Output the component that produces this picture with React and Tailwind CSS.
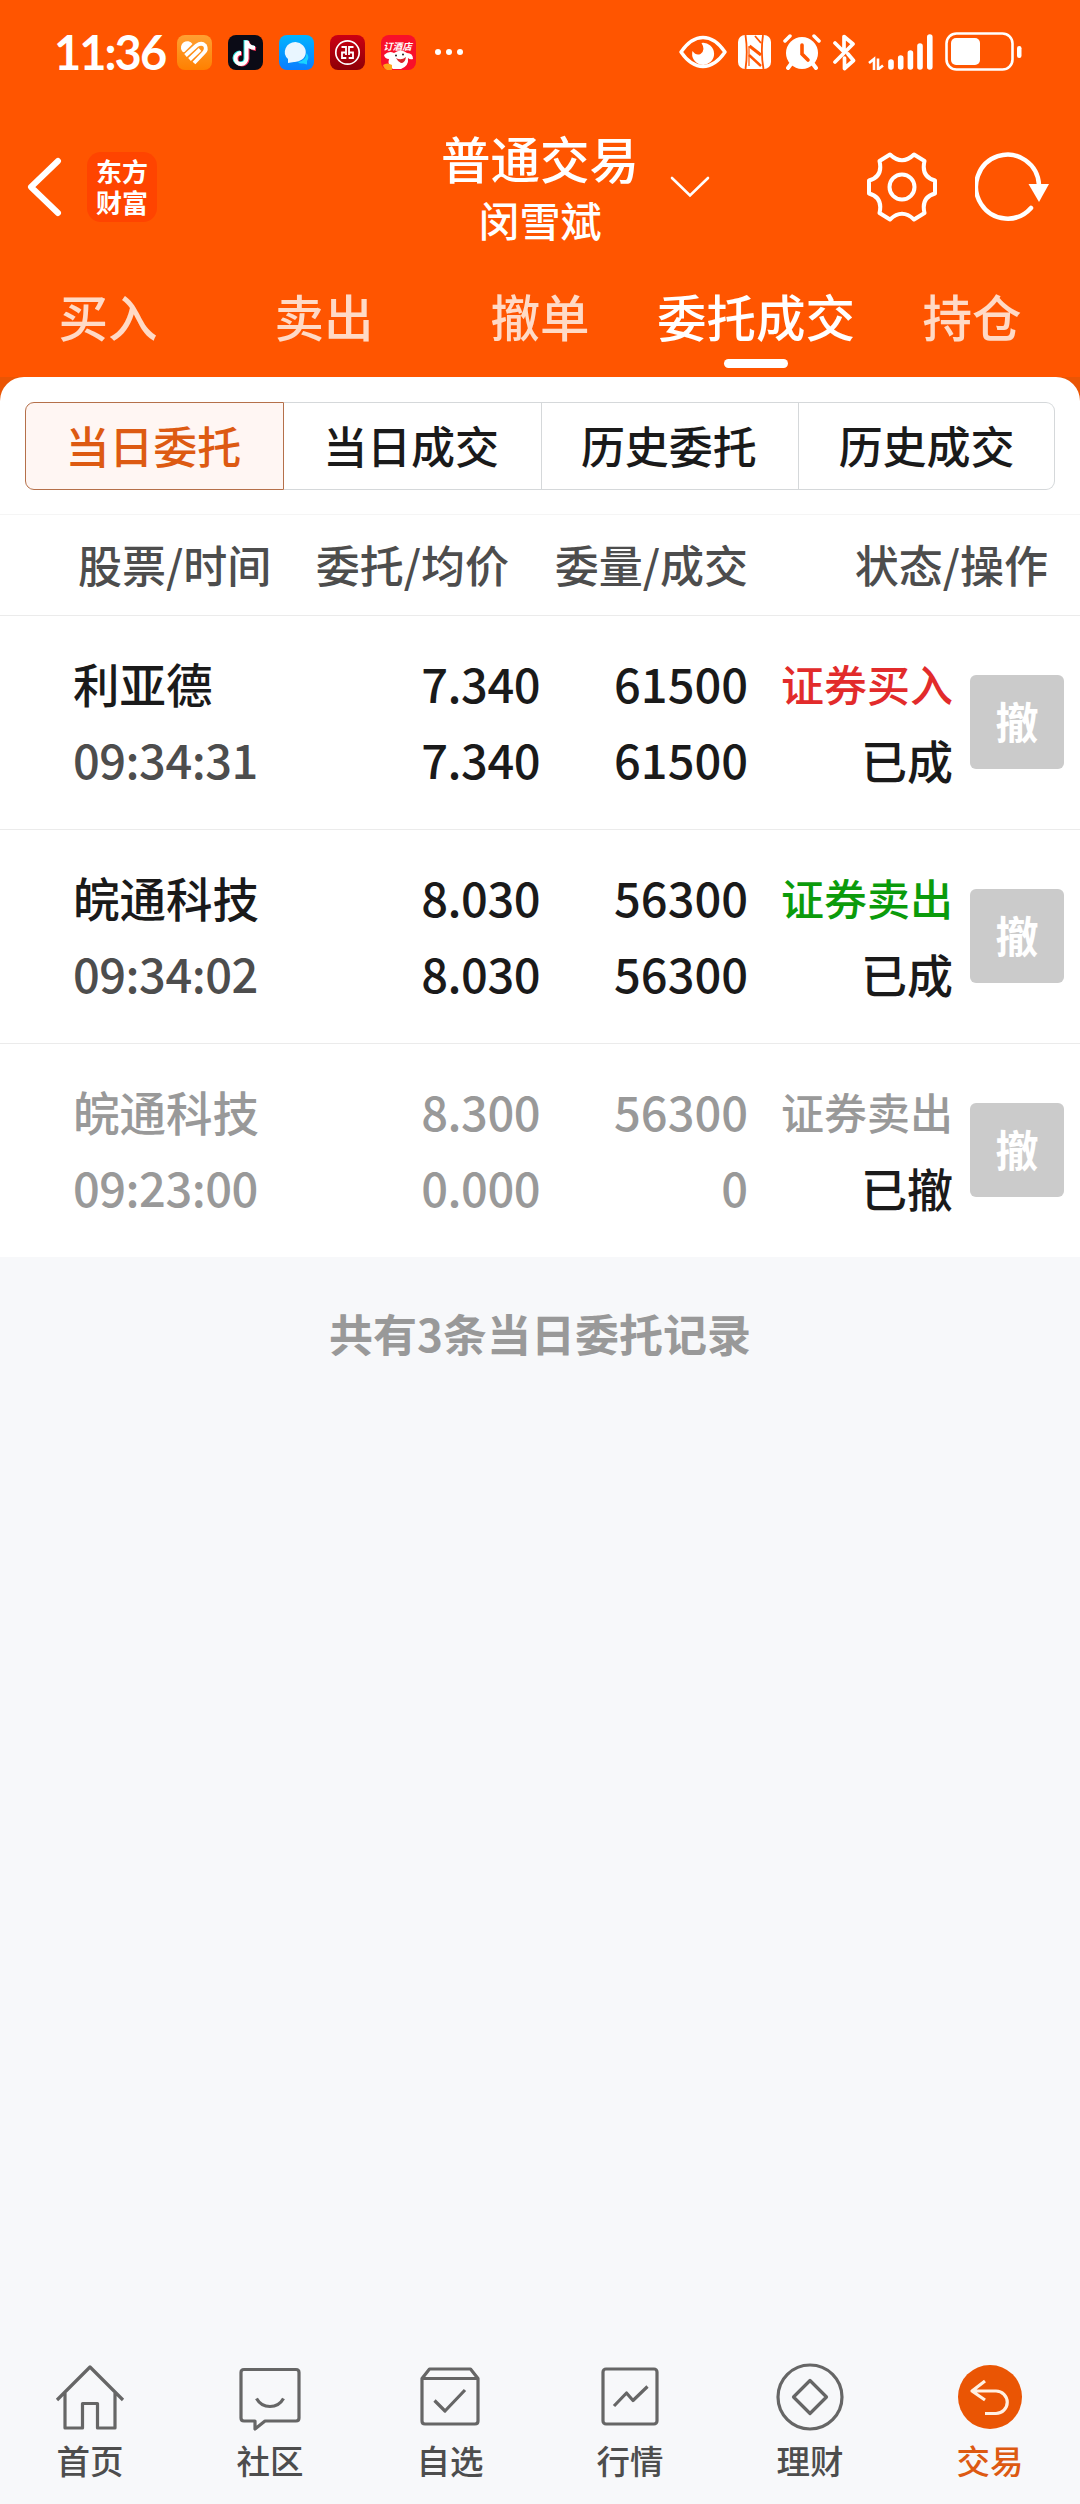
import React from 'react';

const tabs = ['买入', '卖出', '撤单', '委托成交', '持仓'];

const segments = ['当日委托', '当日成交', '历史委托', '历史成交'];

const orders = [
  {
    name: '利亚德',
    time: '09:34:31',
    price: '7.340',
    avg: '7.340',
    qty: '61500',
    filled: '61500',
    side: '证券买入',
    sideColor: 'text-[#e22b2b]',
    status: '已成',
  },
  {
    name: '皖通科技',
    time: '09:34:02',
    price: '8.030',
    avg: '8.030',
    qty: '56300',
    filled: '56300',
    side: '证券卖出',
    sideColor: 'text-[#0b9b0b]',
    status: '已成',
  },
  {
    name: '皖通科技',
    time: '09:23:00',
    price: '8.300',
    avg: '0.000',
    qty: '56300',
    filled: '0',
    side: '证券卖出',
    sideColor: 'text-[#999999]',
    status: '已撤',
    canceled: true,
  },
];

function StatusBar() {
  return (
    <div className="flex h-[104px] items-center justify-between pl-[54px] pr-[57px] text-white">
      <div className="flex items-center">
        <span className="w-[123px] whitespace-nowrap pb-px font-['Lato','Noto_Sans_CJK_SC',sans-serif] text-[47px] font-bold leading-[46px] tracking-[-2px]">
          11:36
        </span>
        <div className="flex items-center gap-4">
          {/* Health */}
          <svg className="h-[35px] w-[35px]" viewBox="0 0 35 35">
            <defs>
              <linearGradient id="health" x1="0" y1="0" x2="0" y2="1">
                <stop offset="0" stopColor="#ffa033" />
                <stop offset="1" stopColor="#ff8000" />
              </linearGradient>
            </defs>
            <rect width="35" height="35" rx="8" fill="url(#health)" />
            <path d="M5 16 A5.500 5.500 0 0 1 15.500 9 L7.500 17 Q5.500 17.500 5 16Z" fill="#fff" />
            <g stroke="#fff" strokeWidth="3.800" fill="none">
              <path d="M8.500 20.500 L19.500 10.500 Q24.500 7 28 10.500 Q30 14.500 27 17.500 L17 28" />
              <path d="M12.500 24.500 L23 14.500" />
            </g>
          </svg>
          {/* Short video */}
          <svg className="h-[35px] w-[35px]" viewBox="0 0 35 35">
            <rect width="35" height="35" rx="8" fill="#0b0b16" />
            <g fill="none" strokeWidth="4">
              <path d="M17.500 5 V23 A5.500 5.500 0 1 1 12 17.500 M17.500 6 Q19 12 26 12.500" stroke="#28e5e0" />
              <path d="M19.500 6 V24 A5.500 5.500 0 1 1 14 18.500 M19.500 7 Q21 13 28 14" stroke="#fb3059" />
              <path d="M18.500 5.500 V23.500 A5.500 5.500 0 1 1 13 18 M18.500 6 Q20 12.500 27 13" stroke="#fff" />
            </g>
          </svg>
          {/* Messages */}
          <svg className="h-[35px] w-[35px]" viewBox="0 0 35 35">
            <defs>
              <linearGradient id="msg" x1="0" y1="0" x2="0" y2="1">
                <stop offset="0" stopColor="#00b4ff" />
                <stop offset="1" stopColor="#0a7dff" />
              </linearGradient>
            </defs>
            <rect width="35" height="35" rx="8" fill="url(#msg)" />
            <path d="M19 27 Q27 26 27.500 18 Q31 22 28 26 V29.500 L24.500 28.500 Q20 29 19 27Z" fill="#19d3ff" />
            <path d="M16.500 7 A11 10 0 1 1 15 27 L9 28 V24 A11 10 0 0 1 16.500 7Z" fill="#e9f6ff" />
          </svg>
          {/* Bank */}
          <svg className="h-[35px] w-[35px]" viewBox="0 0 35 35">
            <defs>
              <linearGradient id="bank" x1="0" y1="0" x2="0" y2="1">
                <stop offset="0" stopColor="#cc0012" />
                <stop offset="1" stopColor="#8d0007" />
              </linearGradient>
            </defs>
            <rect width="35" height="35" rx="8" fill="url(#bank)" />
            <circle cx="17.500" cy="17.500" r="11.700" fill="none" stroke="#fff" strokeWidth="1.700" />
            <path
              d="M11.500 12 H16 V17.500 H12 V23 H16.300 M23.500 12 H19 V17.500 H23 V23 H18.700 M16 17.500 V20 M19 17.500 V20"
              fill="none"
              stroke="#fff"
              strokeWidth="1.800"
            />
          </svg>
          {/* Shopping */}
          <svg className="h-[35px] w-[35px]" viewBox="0 0 35 35">
            <rect width="35" height="35" rx="8" fill="#f8102a" />
            <text x="16.500" y="14.500" textAnchor="middle" fontSize="9.500" fontWeight="700" fill="#fff" fontStyle="italic">订酒店</text>
            <path d="M3 20 Q8 15 13 18 Q20 13 26 18 Q32 18 32 24 Q29 25 27 23 Q28 31 20 34 H12 Q6 30 8 24 Q4 24 3 20Z" fill="#fff" />
            <path d="M15 23 Q20 26 25 22 Q24 28 20 28 Q17 27 15 23Z" fill="#d8232a" />
            <circle cx="15" cy="20.500" r="1" fill="#222" />
            <circle cx="22" cy="19.500" r="1" fill="#222" />
            <path d="M2 30 Q6 27 11 30 V35 H6 Q3 34 2 30Z" fill="#ffa21a" />
          </svg>
        </div>
        <div className="ml-[19px] flex gap-[5px]">
          <i className="h-1.5 w-1.5 rounded-full bg-white" />
          <i className="h-1.5 w-1.5 rounded-full bg-white" />
          <i className="h-1.5 w-1.5 rounded-full bg-white" />
        </div>
      </div>

      <div className="flex items-center">
        {/* Eye comfort */}
        <svg className="h-[36px] w-[48px]" viewBox="0 0 48 36">
          <path d="M2 18 Q12 3.500 24 3.500 T46 18 Q36 32.500 24 32.500 T2 18Z" fill="none" stroke="#fff" strokeWidth="3.400" strokeLinejoin="round" />
          <path d="M22.500 9 A11 11 0 1 1 13.500 17 Q17 22 21.500 20 Q27 16 22.500 9Z" fill="#fff" />
        </svg>
        {/* NFC */}
        <svg className="ml-[11px] h-[34px] w-[33px]" viewBox="0 0 33 34">
          <rect width="33" height="34" rx="7" fill="#fff" />
          <g fill="none" stroke="#ff5500" strokeWidth="1.800">
            <path d="M7.500 0 Q10 17 7.500 34" />
            <path d="M25 0 Q22.500 17 25.500 34" />
            <path d="M17 1 L23 8" />
            <path d="M11 11 V31" strokeWidth="1.200" />
            <path d="M11.500 11 L23 20" strokeWidth="3" />
            <path d="M11 20 L23 31" strokeWidth="2.400" />
          </g>
        </svg>
        {/* Alarm */}
        <svg className="ml-[12px] h-[36px] w-[38px]" viewBox="0 0 38 36">
          <circle cx="19" cy="19" r="16" fill="#fff" />
          <path d="M2 7 L7 2 M36 7 L31 2" stroke="#fff" strokeWidth="3.500" strokeLinecap="round" />
          <path d="M8 30 L5 34 M30 30 L33 34" stroke="#fff" strokeWidth="4" strokeLinecap="round" />
          <path d="M19 11 V20 L25 26" fill="none" stroke="#ff5500" strokeWidth="3.600" strokeLinecap="round" />
        </svg>
        {/* Bluetooth */}
        <svg className="ml-[11px] h-[37px] w-[25px]" viewBox="0 0 25 37">
          <path d="M3 9 L12 18 V2.500 L21 10 L3 28 M16 20 L21.500 26.500 L12.500 34.500 V24" fill="none" stroke="#fff" strokeWidth="3.700" strokeLinejoin="round" strokeLinecap="round" />
        </svg>
        {/* Signal */}
        <svg className="ml-[11px] h-[36px] w-[66px]" viewBox="0 0 66 36">
          <path d="M1 29 L6 25 V36 M10 24.500 V35.500 L15 31.500" fill="none" stroke="#fff" strokeWidth="2.600" />
          <g stroke="#fff" strokeWidth="5.600" strokeLinecap="round">
            <path d="M23 28 V33 M32.700 24 V33 M42.400 19 V33 M52 12 V33 M61.800 3 V33" />
          </g>
        </svg>
        {/* Battery */}
        <svg className="ml-[11px] h-[40px] w-[78px]" viewBox="0 0 78 40">
          <rect x="1.500" y="1.500" width="66" height="36" rx="10" fill="none" stroke="#fff" strokeWidth="2.600" />
          <rect x="6" y="6" width="29" height="27" rx="5" fill="#fff" />
          <rect x="72" y="14" width="4.500" height="12" rx="2.200" fill="#fff" />
        </svg>
      </div>
    </div>
  );
}

function Header() {
  return (
    <div className="grid h-[166px] grid-cols-[1fr_auto_1fr] items-center text-white">
      <div className="flex items-center pl-[25px]">
        <svg className="h-[60px] w-[38px]" viewBox="0 0 38 60">
          <path d="M33 4 L6 30 L33 56" fill="none" stroke="#fff" strokeWidth="6" strokeLinecap="round" strokeLinejoin="round" />
        </svg>
        <div className="ml-[24px] flex h-[70px] w-[70px] items-center justify-center rounded-[14px] bg-[#ff4400] pb-[3px]">
          <span className="w-[52px] break-all text-[26px] font-bold leading-[31px]">东方财富</span>
        </div>
      </div>
      <div className="text-center">
        <div className="text-[49.500px] font-medium leading-[64px]">普通交易</div>
        <div className="text-[41px] font-medium leading-[58px]">闵雪斌</div>
      </div>
      <div className="flex items-center pl-[31px]">
        <svg className="h-[22px] w-[40px]" viewBox="0 0 40 22">
          <path d="M2 2 L20 19.500 L38 2" fill="none" stroke="#fff" strokeWidth="2.600" strokeLinecap="round" />
        </svg>
        <svg className="ml-[157px] h-[70px] w-[70px]" viewBox="0 0 70 70">
          <path
            d="M23 2.500 Q35 14 47 2.500 L57.500 9 Q53.800 24.500 68 28.500 V41.500 Q53.800 45.500 57.500 61 L47 67.500 Q35 56 23 67.500 L12.500 61 Q16.200 45.500 2 41.500 V28.500 Q16.200 24.500 12.500 9Z"
            fill="none"
            stroke="#fff"
            strokeWidth="4"
            strokeLinejoin="round"
          />
          <circle cx="35" cy="35" r="12.500" fill="none" stroke="#fff" strokeWidth="4" />
        </svg>
        <svg className="ml-[38px] h-[70px] w-[76px]" viewBox="0 0 76 70">
          <path d="M64 33 A31.500 32 0 1 0 56 56" fill="none" stroke="#fff" strokeWidth="4.500" strokeLinecap="round" />
          <path d="M53.500 32 H74 L64 50Z" fill="#fff" />
        </svg>
      </div>
    </div>
  );
}

function Tabs({ active }) {
  return (
    <div className="grid h-[107px] grid-cols-5 text-[49.500px] font-medium text-[#ffdac6]">
      {tabs.map((tab) => (
        <div key={tab} className="flex flex-col items-center whitespace-nowrap pt-[10px]">
          {tab === active ? (
            <>
              <span className="leading-[72px] text-white">{tab}</span>
              <span className="mt-[7px] h-[9px] w-16 rounded-full bg-white" />
            </>
          ) : (
            <span className="leading-[72px]">{tab}</span>
          )}
        </div>
      ))}
    </div>
  );
}

function Segments({ active }) {
  return (
    <div className="flex h-[138px] items-start border-b border-[#f5f5f5] px-[25px] pt-[25px] text-[44px] font-medium">
      {segments.map((label) => (
        <div
          key={label}
          className={
            label === active
              ? 'flex h-[88px] flex-1 items-center justify-center rounded-l-[9px] border border-[#b5704a] bg-[#fff6f3] pb-[3px] pr-[2px] text-[#dd5a12]'
              : 'flex h-[88px] flex-1 items-center justify-center border border-l-0 border-[#d5d8da] pb-[3px] pr-[2px] text-[#1a1a1a] last:rounded-r-[9px] last:pr-0'
          }
        >
          {label}
        </div>
      ))}
    </div>
  );
}

function OrderRow({ order }) {
  const main = order.canceled ? 'text-[#999999]' : 'text-[#1a1a1a]';
  const time = order.canceled ? 'text-[#999999]' : 'text-[#4d4d4d]';

  return (
    <div className="flex h-[214px] items-center border-b border-[#ebebeb] pb-px pl-[73px] pr-4 text-[47px] font-medium leading-[76px] last:h-[213px] last:border-b-0">
      <div className="w-[227px] whitespace-nowrap pb-[3px]">
        <div className={`text-[46.500px] ${main}`}>{order.name}</div>
        <div className={`tracking-[-0.5px] ${time}`}>{order.time}</div>
      </div>
      <div className={`w-[240px] pb-[3px] text-right tracking-[-0.5px] ${main}`}>
        <div>{order.price}</div>
        <div>{order.avg}</div>
      </div>
      <div className={`w-[208px] pb-[3px] text-right ${main}`}>
        <div>{order.qty}</div>
        <div>{order.filled}</div>
      </div>
      <div className="w-[205px] pb-[3px] text-right">
        <div className={`text-[43px] ${order.sideColor}`}>{order.side}</div>
        <div className="text-[46px] text-[#1a1a1a]">{order.status}</div>
      </div>
      <button className="ml-[17px] flex h-[94px] w-[94px] items-center justify-center rounded-md bg-[#cbcbcb] pb-[5px] text-[43px] font-bold text-white">
        撤
      </button>
    </div>
  );
}

const navItems = [
  {
    label: '首页',
    icon: (
      <path d="M2 36 L35 3 L68 36 M10 29 V64 H27.500 V39.500 H42.500 V64 H60 V29" />
    ),
  },
  {
    label: '社区',
    icon: (
      <>
        <path d="M9 5.500 H61 Q64 5.500 64 8.500 V54 Q64 57 61 57 H30 L20 65 V57 H9 Q6 57 6 54 V8.500 Q6 5.500 9 5.500Z" />
        <path d="M21.500 34.500 Q26 42.500 35 42.500 T48.500 34.500" />
      </>
    ),
  },
  {
    label: '自选',
    icon: (
      <>
        <path d="M7 14.500 L14.500 5 H55.500 L63 14.500 V57 Q63 60 60 60 H10 Q7 60 7 57Z M7 14.500 H63" />
        <path d="M19.500 36.500 L30 47 L50 26" />
      </>
    ),
  },
  {
    label: '行情',
    icon: (
      <>
        <rect x="8" y="5" width="54" height="55" rx="3" />
        <path d="M19 42 L31.500 29 L38 36.500 L52.500 22.500" />
      </>
    ),
  },
  {
    label: '理财',
    icon: (
      <>
        <circle cx="35" cy="33" r="32" />
        <path d="M35 16.500 L51.500 33 L35 49.500 L18.500 33Z" />
      </>
    ),
  },
  {
    label: '交易',
    active: true,
    icon: (
      <>
        <circle cx="35" cy="33" r="32" fill="#ea5504" stroke="none" />
        <path d="M30 17 L17 27 L30 36 M17 27 H41 A11.200 11.200 0 0 1 41 49.500 H30" stroke="#fff0e2" />
      </>
    ),
  },
];

function BottomNav() {
  return (
    <div className="grid h-[154px] grid-cols-6 pt-[14px]">
      {navItems.map((item) => (
        <div key={item.label} className="flex flex-col items-center">
          <svg
            className="h-[68px] w-[70px] overflow-visible"
            viewBox="0 0 70 68"
            fill="none"
            stroke="#666"
            strokeWidth="3.200"
            strokeLinejoin="round"
          >
            {item.icon}
          </svg>
          <span
            className={
              item.active
                ? 'mt-1 text-[33.500px] font-medium leading-[48px] text-[#dd5a12]'
                : 'mt-1 text-[33.500px] font-medium leading-[48px] text-[#4d4d4d]'
            }
          >
            {item.label}
          </span>
        </div>
      ))}
    </div>
  );
}

export default function App() {
  return (
    <div className="flex h-[2504px] w-[1080px] flex-col bg-[#f7f8fa] font-['Noto_Sans_CJK_SC',sans-serif]">
      <div className="bg-[#ff5500]">
        <StatusBar />
        <Header />
        <Tabs active="委托成交" />
      </div>

      <div className="bg-[#ea5504]">
        <div className="rounded-t-[24px] bg-white">
          <Segments active="当日委托" />

          {/* Column titles */}
          <div className="flex h-[101px] items-center border-b border-[#ebebeb] pb-[3px] pl-[78px] pr-[32px] text-[44px] font-medium text-[#4d4d4d]">
            <div className="w-[192px] whitespace-nowrap">股票/时间</div>
            <div className="w-[239px] text-right">委托/均价</div>
            <div className="w-[239px] text-right">委量/成交</div>
            <div className="flex-1 text-right">状态/操作</div>
          </div>

          {orders.map((order, i) => (
            <OrderRow key={i} order={order} />
          ))}
        </div>
      </div>

      <div className="flex-1 pt-[43px] text-center text-[44px] font-bold leading-[66px] text-[#999999]">
        共有3条当日委托记录
      </div>

      <BottomNav />
    </div>
  );
}
